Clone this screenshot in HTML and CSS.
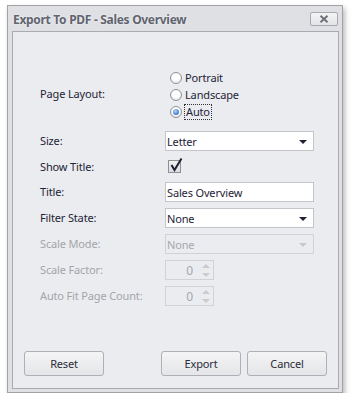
FILE: index.html
```html
<!DOCTYPE html>
<html>
<head>
<meta charset="utf-8">
<link rel="stylesheet" href="styles.css">
</head>
<body>
<div class="window">
  <div class="titlebar">
    <span class="title">Export To PDF - Sales Overview</span>
    <span class="close">
      <svg width="10" height="8" viewBox="0 0 10 8"><path d="M1.5 0.8 L8.5 7.2 M8.5 0.8 L1.5 7.2" stroke="#6f7177" stroke-width="2" fill="none"/></svg>
    </span>
  </div>
  <div class="panel">
    <div class="form">
      <div class="label layout">Page Layout:</div>
      <div class="radios">
        <div class="radio"><span class="circle"></span><span>Portrait</span></div>
        <div class="radio"><span class="circle"></span><span>Landscape</span></div>
        <div class="radio"><span class="circle checked"></span><span class="focus">Auto</span></div>
      </div>

      <div class="label">Size:</div>
      <div class="combo"><span>Letter</span><span class="arrow"></span></div>

      <div class="label">Show Title:</div>
      <div class="checkrow">
        <span class="checkbox">
          <svg class="tick" width="14" height="16" viewBox="0 0 14 16"><path d="M2.5 8 L5.5 13 L12.5 1.5" stroke="#1f2233" stroke-width="2" fill="none" stroke-linejoin="miter"/></svg>
        </span>
      </div>

      <div class="label">Title:</div>
      <div class="textbox">Sales Overview</div>

      <div class="label">Filter State:</div>
      <div class="combo"><span>None</span><span class="arrow"></span></div>

      <div class="label disabled">Scale Mode:</div>
      <div class="combo off"><span>None</span><span class="arrow"></span></div>

      <div class="label disabled">Scale Factor:</div>
      <div class="spin"><span class="val">0</span><span class="spinbtns"><span class="up"></span><span class="down"></span></span></div>

      <div class="label disabled">Auto Fit Page Count:</div>
      <div class="spin"><span class="val">0</span><span class="spinbtns"><span class="up"></span><span class="down"></span></span></div>
    </div>

    <div class="buttons">
      <div class="btn">Reset</div>
      <div class="right">
        <div class="btn">Export</div>
        <div class="btn">Cancel</div>
      </div>
    </div>
  </div>
</div>
</body>
</html>
```

FILE: styles.css
```css
html, body {
  margin: 0;
  padding: 0;
  background: #ffffff;
}
body {
  font-family: "Noto Sans", "Open Sans", sans-serif;
  font-size: 11px;
  letter-spacing: -0.15px;
  color: #1e2436;
}
.window {
  box-sizing: border-box;
  margin: 5px 0 0 7px;
  width: 336px;
  height: 388px;
  border: 1px solid #a2a3a7;
  background: #dfe0e3;
  box-shadow: 2px 3px 5px rgba(0, 0, 0, 0.28);
  display: flex;
  flex-direction: column;
  padding: 0 3px 3px 4px;
}
.titlebar {
  height: 25px;
  display: flex;
  align-items: center;
  justify-content: space-between;
  flex: none;
}
.title {
  font-weight: bold;
  font-size: 12px;
  letter-spacing: -0.3px;
  color: #616470;
  margin-left: 1px;
  margin-top: 1px;
  text-shadow: 0 0 2px rgba(255, 255, 255, 0.9);
}
.close {
  box-sizing: border-box;
  width: 28px;
  height: 14px;
  border: 1px solid #a7a9ae;
  border-radius: 2px;
  background: linear-gradient(#f4f4f5, #e3e4e7);
  display: flex;
  align-items: center;
  justify-content: center;
  margin-right: 1px;
  margin-top: 1px;
}
.close svg { display: block; }
.panel {
  flex: 1;
  box-sizing: border-box;
  border: 1px solid #a9abb0;
  background: #ebecef;
  display: flex;
  flex-direction: column;
  padding: 37px 11px 12px 27px;
}
.form {
  display: grid;
  grid-template-columns: 125px 149px;
  row-gap: 6px;
  align-items: center;
}
.label {
  line-height: 14px;
  white-space: nowrap;
}
.label.layout { margin-bottom: 6px; }
.label.disabled { color: #a3a5aa; }
.radios {
  display: flex;
  flex-direction: column;
  margin-bottom: 5px;
}
.radio {
  height: 17px;
  display: flex;
  align-items: center;
  padding-left: 5px;
}
.circle {
  box-sizing: border-box;
  width: 12px;
  height: 12px;
  border-radius: 50%;
  border: 1px solid #8f9196;
  background: radial-gradient(circle at 50% 35%, #ffffff 40%, #dcdde0 100%);
  margin-right: 3px;
  display: flex;
  align-items: center;
  justify-content: center;
}
.circle.checked::after {
  content: "";
  width: 6px;
  height: 6px;
  border-radius: 50%;
  background: radial-gradient(circle at 40% 35%, #b9d4f5 0%, #4d86d6 60%, #2b5fb0 100%);
}
.focus {
  outline: 1px dotted #333;
  outline-offset: 0;
  padding: 0 1px;
  line-height: 14px;
}
.combo, .textbox {
  box-sizing: border-box;
  height: 20px;
  border: 1px solid #c3c5ca;
  background: #ffffff;
  display: flex;
  align-items: center;
  padding-left: 1px;
}
.combo { justify-content: space-between; padding-right: 6px; }
.arrow {
  width: 0;
  height: 0;
  border-left: 4px solid transparent;
  border-right: 4px solid transparent;
  border-top: 4px solid #1f2230;
  margin-top: 1px;
}
.combo.off {
  background: #ebecef;
  border-color: #d0d2d6;
  color: #a6a8ad;
}
.combo.off .arrow { border-top-color: #c6c8cc; }
.checkrow {
  height: 19px;
  display: flex;
  align-items: center;
  padding-left: 3px;
}
.checkbox {
  position: relative;
  box-sizing: border-box;
  width: 13px;
  height: 13px;
  border: 1px solid #8e9095;
  background: linear-gradient(#f1f1f2, #dcdde0);
}
.tick {
  position: absolute;
  left: 0;
  top: -4px;
}
.spin {
  box-sizing: border-box;
  width: 49px;
  height: 20px;
  border: 1px solid #d0d2d6;
  display: flex;
  align-items: center;
  justify-content: flex-end;
  color: #a6a8ad;
}
.val { margin-right: 5px; font-size: 12px; }
.spinbtns {
  width: 15px;
  display: flex;
  flex-direction: column;
  align-items: center;
  gap: 5px;
}
.up, .down {
  width: 0;
  height: 0;
  border-left: 4px solid transparent;
  border-right: 4px solid transparent;
}
.up { border-bottom: 4px solid #c9cbcf; }
.down { border-top: 4px solid #c9cbcf; }
.buttons {
  margin-top: auto;
  display: flex;
  justify-content: space-between;
  margin-left: -16px;
}
.right { display: flex; gap: 6px; }
.btn {
  box-sizing: border-box;
  width: 80px;
  height: 25px;
  border: 1px solid #aeb0b5;
  border-radius: 3px;
  background: linear-gradient(#f4f4f5, #e4e5e8);
  display: flex;
  align-items: center;
  justify-content: center;
  color: #2a2d38;
}
```
